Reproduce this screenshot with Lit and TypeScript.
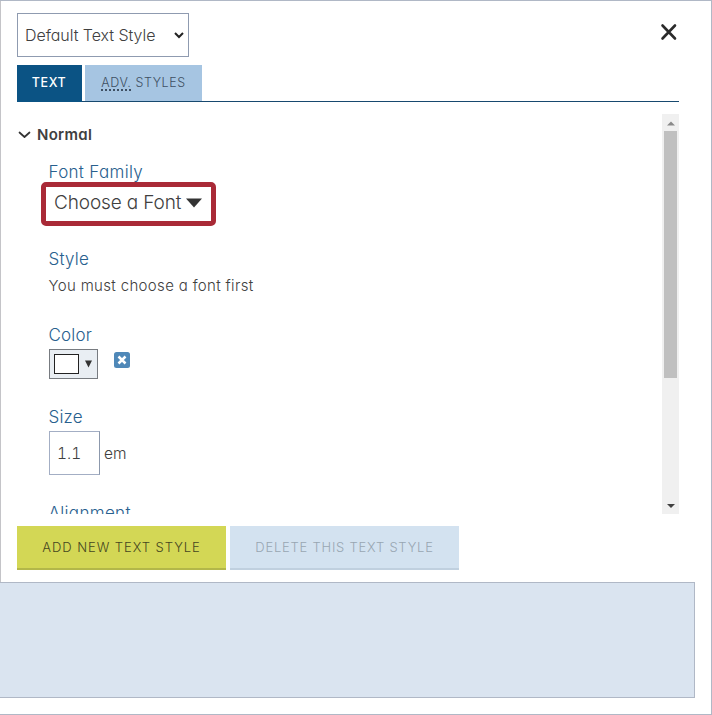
import { LitElement, html, css } from "lit";
import { customElement } from "lit/decorators.js";

@customElement("app-root")
export class AppRoot extends LitElement {
  static styles = css`
    * { box-sizing: border-box; }
    :host {
      display: block;
      width: 712px;
      height: 715px;
      overflow: hidden;
      background: #fff;
      font-family: Inter, "Open Sans", sans-serif;
      font-feature-settings: "cv11";
      font-weight: 350;
      color: #404040;
    }
    svg { display: block; flex: none; }
    .dialog {
      height: 715px;
      border: 1px solid #b0b8c6;
      border-left: 0;
      display: flex;
      flex-direction: column;
    }
    .body {
      height: 581px;
      flex: none;
      padding: 12px 32px 0 16px;
      border-left: 1px solid #c4c4c8;
    }
    .top { display: flex; justify-content: space-between; height: 44px; }
    .select {
      width: 172px;
      height: 44px;
      border: 1px solid #8f9bb0;
      display: flex;
      align-items: center;
      justify-content: space-between;
      padding: 0 3px 0 7px;
      font-size: 16px;
      white-space: nowrap;
    }
    .select .t { letter-spacing: -0.05px; }
    .close { margin: 10px 1px 0 0; }
    .tabs {
      margin-top: 8px;
      height: 37px;
      display: flex;
      gap: 3px;
      border-bottom: 1px solid #17496f;
    }
    .tab {
      height: 36px;
      line-height: 35px;
      font-size: 12.5px;
      letter-spacing: 0.57px;
      text-align: center;
    }
    .tab.on { width: 65px; background: #0b5384; color: #fff; height: 37px; font-weight: 450; padding-right: 1px; }
    .tab.off { width: 117px; background: #a6c5e2; color: #3f5063; }
    .abbr {
      text-decoration: underline dotted 1.5px;
      text-underline-offset: 2px;
    }
    .scroller { margin-top: 12px; height: 400px; display: flex; overflow: hidden; }
    .fields { flex: 1; height: 400px; overflow: hidden; }
    .heading {
      height: 40px;
      display: flex;
      align-items: center;
      gap: 6px;
      padding-left: 1px;
      font-size: 15px;
      font-weight: 620;
      letter-spacing: 0.3px;
      padding-top: 1px;
    }
    .group { padding-left: 31.5px; }
    .label {
      height: 20px;
      line-height: 20px;
      font-size: 17px;
      letter-spacing: 0.32px;
      color: #28608e;
      white-space: nowrap;
    }
    .label.style, .label.color, .label.size { letter-spacing: 0.2px; }
    .family { margin-top: 8px; }
    .font-picker {
      margin-left: -7.5px;
      width: 175px;
      height: 44px;
      border: 5px solid #a92a37;
      border-radius: 5px;
      display: flex;
      align-items: center;
      gap: 5px;
      padding: 0 0 3px 8px;
      font-size: 19px;
      letter-spacing: -0.13px;
      white-space: nowrap;
    }
    .style { margin-top: 23px; }
    .note { margin-top: 7px; height: 20px; line-height: 20px; font-size: 15px; letter-spacing: 0.34px; }
    .color { margin-top: 29px; }
    .row { display: flex; margin-top: 4px; margin-left: 0.5px; }
    .swatch {
      width: 49px;
      height: 30px;
      border: 1px solid #777b80;
      background: #e9eef3;
      display: flex;
      align-items: center;
      padding-left: 4px;
      gap: 6px;
    }
    .chip { width: 25px; height: 20px; background: #fff; border: 1px solid #222; }
    .clear { margin: 3px 0 0 16px; }
    .size { margin-top: 28px; }
    .number {
      width: 51px;
      height: 44px;
      border: 1px solid #a3aec4;
      border-right-color: #8c98ac;
      line-height: 43px;
      padding-left: 7px;
      font-size: 15.5px;
      font-feature-settings: "cv11", "tnum";
    }
    .unit { line-height: 45px; margin-left: 4px; font-size: 15.5px; }
    .align { margin-top: 27px; }
    .bar {
      width: 17px;
      height: 400px;
      background: #f0f0f0;
      display: flex;
      flex-direction: column;
      align-items: center;
    }
    .bar .arrow { padding: 7px 0 0; height: 17px; }
    .bar .down { padding: 4px 0 0; }
    .thumb { width: 13px; height: 247px; background: #c0c0c0; }
    .space { flex: 1; }
    .actions { display: flex; gap: 4px; margin-top: 12px; }
    .btn {
      height: 44px;
      line-height: 43px;
      text-align: center;
      font-size: 13px;
      white-space: nowrap;
    }
    .add { width: 209px; background: #d3d755; border-bottom: 2px solid #b3b749; color: #45461f; }
    .delete { width: 229px; background: #d3e2f0; border-bottom: 2px solid #c0d0df; color: #98a6b2; }
    .preview {
      width: 695px;
      height: 116px;
      background: #dae4f0;
      border: 1px solid #b0b8c6;
      border-left: 0;
    }
    .s1 { letter-spacing: 0.95px; }
    .s2 { letter-spacing: 0.77px; }
  `;

  render() {
    return html`
      <div class="dialog">
        <div class="body">
          <div class="top">
            <div class="select">
              <span class="t">Default Text Style</span>
              <svg width="12" height="10" viewBox="0 0 12 10"><path d="M2 3l4 4 4-4" fill="none" stroke="#222" stroke-width="2"/></svg>
            </div>
            <svg class="close" width="18" height="18" viewBox="0 0 18 18"><path d="M2.5 2.5L15 15.5M15 2.5L2.5 15.5" stroke="#2b2b2b" stroke-width="2.6" stroke-linecap="round"/></svg>
          </div>
          <div class="tabs">
            <div class="tab on">TEXT</div>
            <div class="tab off"><span class="abbr">ADV.</span> STYLES</div>
          </div>
          <div class="scroller">
            <div class="fields">
              <div class="heading">
                <svg width="13" height="8" viewBox="0 0 13 8"><path d="M1.5 1.5L6.5 6L11.5 1.5" fill="none" stroke="#333" stroke-width="1.7" stroke-linecap="round" stroke-linejoin="round"/></svg>
                <span class="h">Normal</span>
              </div>
              <div class="group">
                <div class="label family"><span>Font Family</span></div>
                <div class="font-picker">
                  <span class="t">Choose a Font</span>
                  <svg width="16" height="10" viewBox="0 0 16 10"><path d="M0 .5H16L8 9.5z" fill="#333"/></svg>
                </div>
                <div class="label style"><span>Style</span></div>
                <div class="note"><span>You must choose a font first</span></div>
                <div class="label color"><span>Color</span></div>
                <div class="row">
                  <div class="swatch">
                    <div class="chip"></div>
                    <svg width="7" height="8" viewBox="0 0 7 8"><path d="M0 .5H7L3.5 7.5z" fill="#333"/></svg>
                  </div>
                  <svg class="clear" width="16" height="16" viewBox="0 0 16 16"><rect width="16" height="16" rx="2.5" fill="#4f88b8"/><path d="M4.5 4.5l7 7M11.5 4.5l-7 7" stroke="#fff" stroke-width="2.5"/></svg>
                </div>
                <div class="label size"><span>Size</span></div>
                <div class="row">
                  <div class="number">1.1</div>
                  <span class="unit">em</span>
                </div>
                <div class="label align"><span>Alignment</span></div>
              </div>
            </div>
            <div class="bar">
              <svg class="arrow" width="8" height="17" viewBox="0 0 8 10"><path d="M0 4.5L4 .5l4 4z" fill="#8a8a8a"/></svg>
              <div class="thumb"></div>
              <div class="space"></div>
              <svg class="arrow down" width="8" height="17" viewBox="0 0 8 13"><path d="M0 3h8l-4 4z" fill="#404040"/></svg>
            </div>
          </div>
          <div class="actions">
            <div class="btn add"><span class="s1">ADD NEW TEXT STYLE</span></div>
            <div class="btn delete"><span class="s2">DELETE THIS TEXT STYLE</span></div>
          </div>
        </div>
        <div class="preview"></div>
      </div>
    `;
  }
}
